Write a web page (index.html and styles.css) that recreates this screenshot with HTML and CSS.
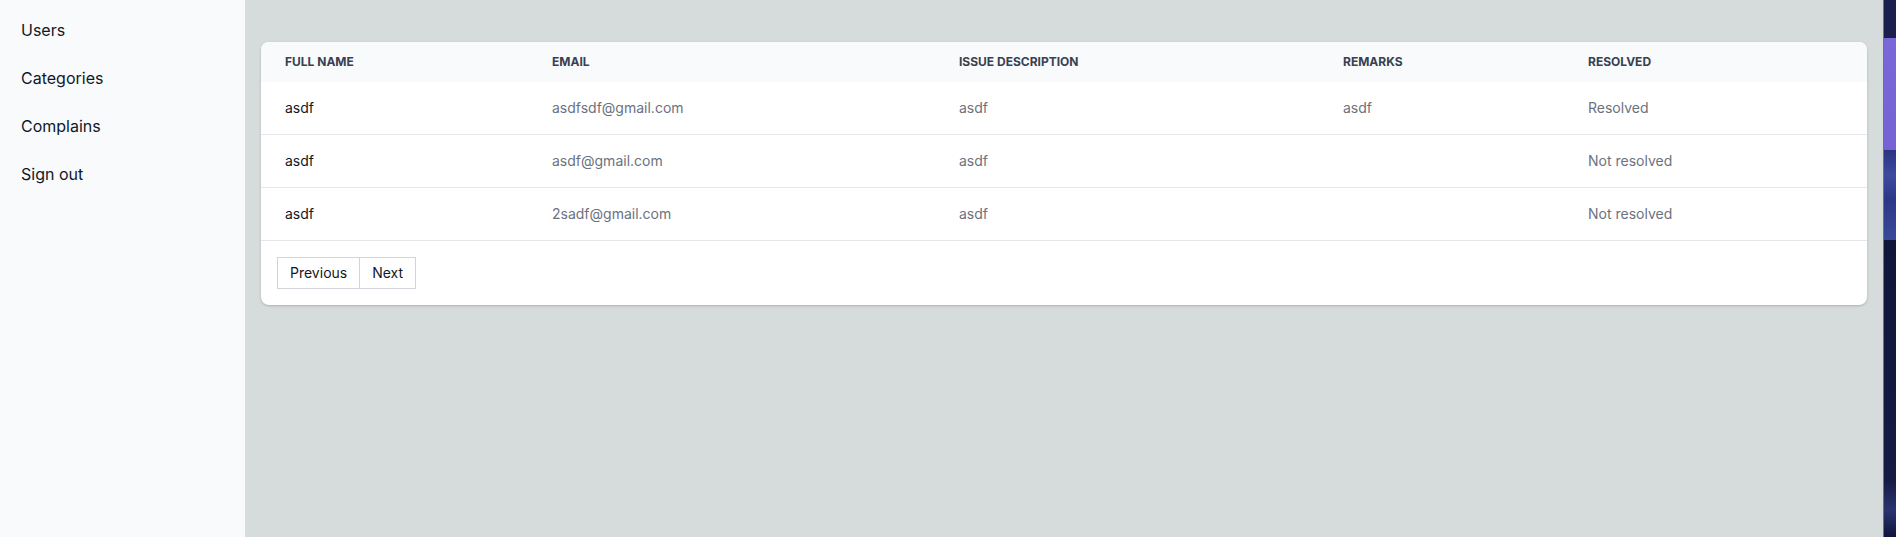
FILE: index.html
```html
<!DOCTYPE html>
<html>
<head>
<meta charset="utf-8">
<link rel="stylesheet" href="styles.css">
</head>
<body>
<div class="layout">
  <aside class="sidebar">
    <a class="nav-item">Users</a>
    <a class="nav-item">Categories</a>
    <a class="nav-item">Complains</a>
    <a class="nav-item">Sign out</a>
  </aside>
  <main class="main">
    <div class="card">
      <table class="table">
        <colgroup>
          <col class="c1"><col class="c2"><col class="c3"><col class="c4"><col class="c5">
        </colgroup>
        <thead>
          <tr>
            <th>Full name</th>
            <th>Email</th>
            <th>Issue description</th>
            <th>Remarks</th>
            <th>Resolved</th>
          </tr>
        </thead>
        <tbody>
          <tr>
            <td class="name">asdf</td>
            <td>asdfsdf@gmail.com</td>
            <td>asdf</td>
            <td>asdf</td>
            <td>Resolved</td>
          </tr>
          <tr>
            <td class="name">asdf</td>
            <td>asdf@gmail.com</td>
            <td>asdf</td>
            <td></td>
            <td>Not resolved</td>
          </tr>
          <tr>
            <td class="name">asdf</td>
            <td>2sadf@gmail.com</td>
            <td>asdf</td>
            <td></td>
            <td>Not resolved</td>
          </tr>
        </tbody>
      </table>
      <div class="pager">
        <button class="btn">Previous</button><button class="btn btn-next">Next</button>
      </div>
    </div>
  </main>
  <div class="edge"></div>
</div>
</body>
</html>
```
FILE: styles.css
```css
* { box-sizing: border-box; }
html, body { margin: 0; padding: 0; height: 100%; }
body {
  font-family: Inter, "Noto Sans", sans-serif;
  color: #111827;
  background: #d6dcdc;
}
.layout {
  display: flex;
  height: 537px;
}
.sidebar {
  width: 245px;
  flex: none;
  background: #f8fafc;
  display: flex;
  flex-direction: column;
  padding: 18px 0 0 21px;
}
.nav-item {
  font-size: 16px;
  line-height: 24px;
  height: 48px;
  color: #111827;
  display: block;
  cursor: pointer;
}
.main {
  flex: 1;
  background: #d6dcdc;
  padding: 42px 16px 16px 16px;
}
.edge {
  width: 13px;
  flex: none;
  border-left: 1px solid #3a7bd5;
  background: linear-gradient(180deg,
    #1b1f4d 0px, #1b1f4d 38px,
    #7a67d9 38px, #7563d6 150px,
    #2a3580 150px, #3d4aa0 175px, #2c3887 200px, #3a4a9a 240px,
    #10153a 240px, #161b45 480px, #2b3470 510px, #10153a 537px);
}
.card {
  background: #ffffff;
  border-radius: 8px;
  box-shadow: 0 1px 3px rgba(0,0,0,0.12), 0 1px 2px rgba(0,0,0,0.08);
  overflow: hidden;
}
.table {
  width: 100%;
  border-collapse: collapse;
  table-layout: fixed;
}
.c1 { width: 267px; }
.c2 { width: 407px; }
.c3 { width: 384px; }
.c4 { width: 245px; }
.c5 { width: auto; }
.table th {
  background: #f9fafb;
  text-align: left;
  text-transform: uppercase;
  font-size: 12px;
  font-weight: 700;
  line-height: 16px;
  color: #374151;
  padding: 12px 24px;
}
.table td {
  font-size: 14px;
  line-height: 20px;
  padding: 16px 24px;
  color: #6b7280;
  border-bottom: 1px solid #e5e7eb;
  height: 53px;
}
.table tbody tr:first-child td { height: 52px; }
.table td.name { color: #111827; }
.pager {
  padding: 16px;
  display: flex;
}
.btn {
  font-family: Inter, "Noto Sans", sans-serif;
  font-size: 14px;
  line-height: 20px;
  color: #111827;
  background: #ffffff;
  border: 1px solid #d1d5db;
  padding: 5px 12px;
  height: 32px;
  margin: 0;
  cursor: pointer;
}
.btn-next { border-left: none; }
```
